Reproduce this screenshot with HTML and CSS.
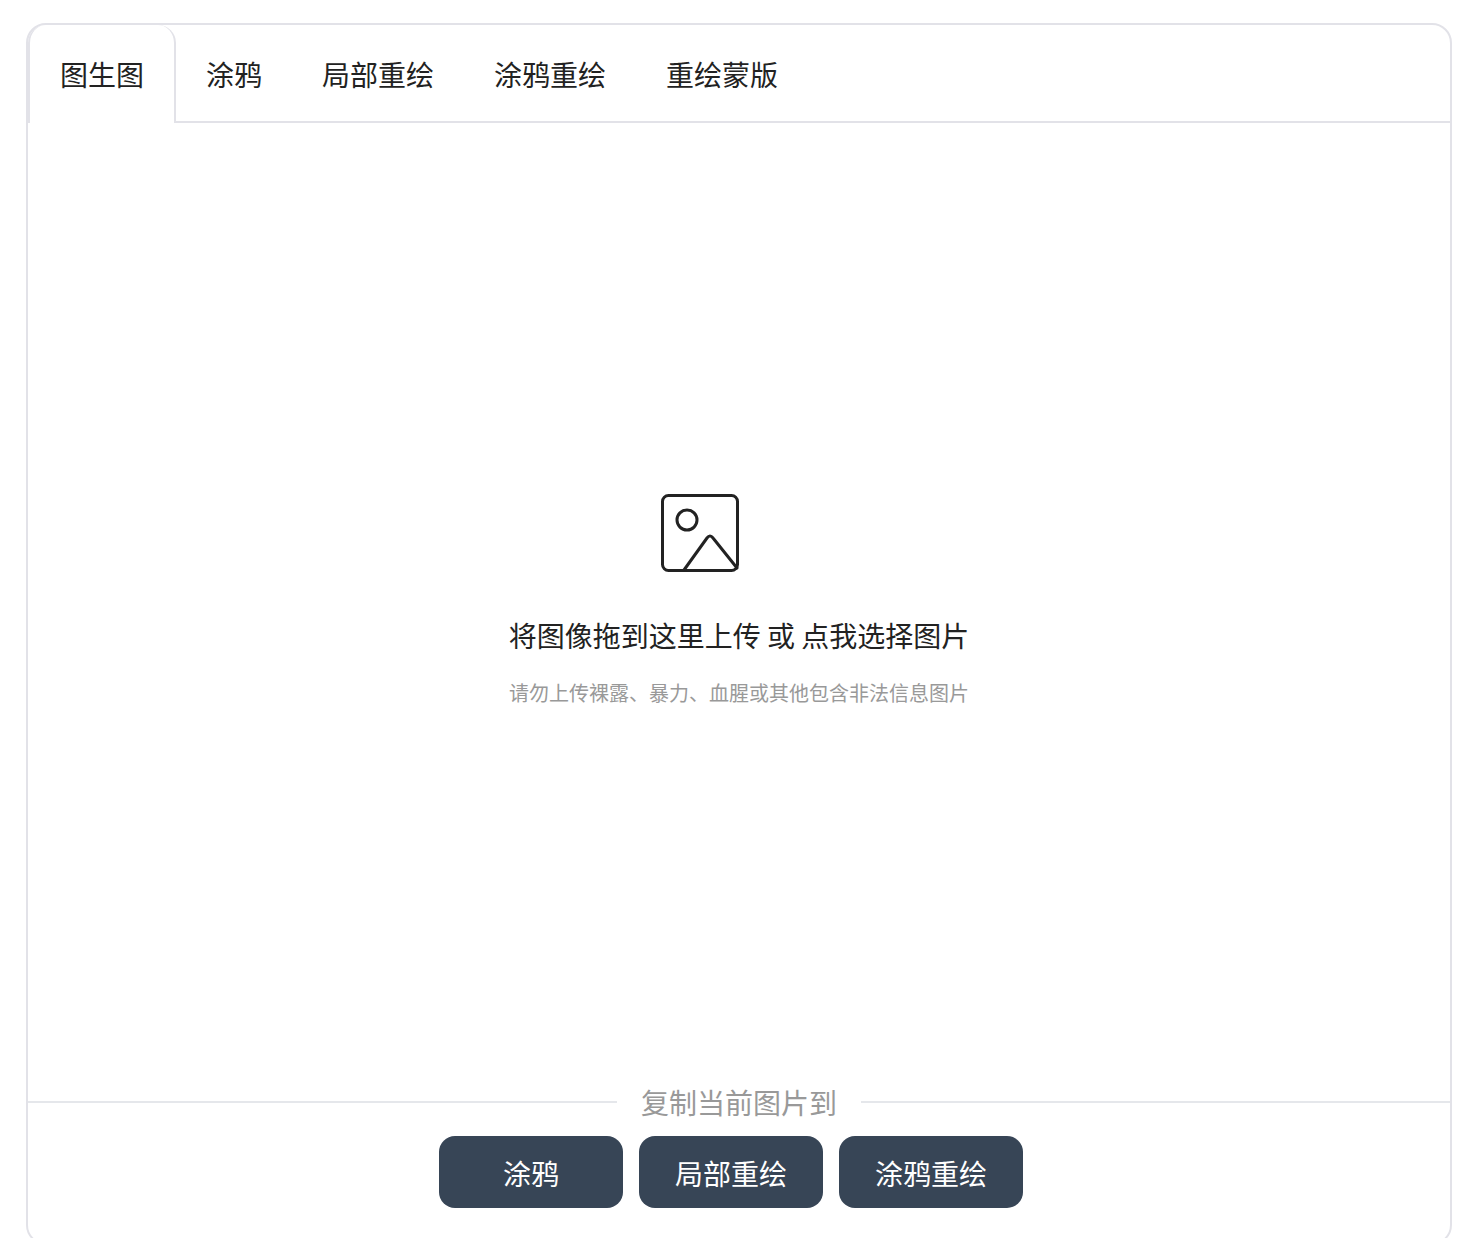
FILE: index.html
```html
<!DOCTYPE html>
<html lang="zh-CN">
<head>
    <meta charset="UTF-8">
    <title>图生图</title>
    <link rel="stylesheet" href="styles.css">
</head>
<body>

<div class="card">
    <nav class="tabs">
        <a class="tab active" href="#">图生图</a>
        <a class="tab" href="#">涂鸦</a>
        <a class="tab" href="#">局部重绘</a>
        <a class="tab" href="#">涂鸦重绘</a>
        <a class="tab" href="#">重绘蒙版</a>
    </nav>

    <div class="upload">
        <svg class="upload-icon" width="78" height="78" viewBox="0 0 78 78" fill="none" stroke="#222" stroke-width="3" stroke-linecap="round" stroke-linejoin="round">
            <rect x="1.5" y="1.5" width="75" height="75" rx="6"/>
            <circle cx="26" cy="26" r="10"/>
            <path d="M23 76 L46 44 Q49 40 52 44 L76 74"/>
        </svg>
        <p class="upload-title">将图像拖到这里上传 或 点我选择图片</p>
        <p class="upload-hint">请勿上传裸露、暴力、血腥或其他包含非法信息图片</p>
    </div>

    <div class="divider"><span>复制当前图片到</span></div>

    <div class="actions">
        <button type="button">涂鸦</button>
        <button type="button">局部重绘</button>
        <button type="button">涂鸦重绘</button>
    </div>
</div>

</body>
</html>
```

FILE: styles.css
```css
html, body {
    height: 1238px;
    overflow: hidden;
}
body {
    margin: 0;
    padding: 23px 20px 0 26px;
    background-color: #fff;
    font-family: "Noto Sans CJK SC", "Noto Sans", sans-serif;
    color: #222;
}
.card {
    box-sizing: border-box;
    display: flex;
    flex-direction: column;
    height: 1222px;
    border: 2px solid #e2e2e8;
    border-radius: 20px;
}
.tabs {
    display: flex;
    height: 96px;
    border-bottom: 2px solid #e2e2e8;
}
.tab {
    padding: 0 30px;
    font-size: 28px;
    line-height: 98px;
    color: #222;
    text-decoration: none;
}
.tab.active {
    height: 98px;
    padding: 0 30px 0 30px;
    background-color: #fff;
    border: solid #e2e2e8;
    border-width: 0 2px 0 2px;
    border-radius: 18px 18px 0 0;
}
.upload {
    flex: 1;
    display: flex;
    flex-direction: column;
    align-items: center;
    padding-top: 371px;
}
.upload-icon {
    display: block;
    margin-right: 78px;
}
.upload-title {
    margin: 42px 0 0;
    font-size: 28px;
    line-height: 42px;
}
.upload-hint {
    margin: 22px 0 0;
    font-size: 20px;
    line-height: 30px;
    color: #999;
}
.divider {
    display: flex;
    align-items: center;
    font-size: 28px;
    line-height: 42px;
    color: #999;
}
.divider::before, .divider::after {
    content: "";
    flex: 1;
    height: 2px;
    background-color: #e5e7eb;
}
.divider span {
    padding: 0 24px;
}
.actions {
    display: flex;
    justify-content: center;
    gap: 16px;
    padding: 13px 16px 35px 0;
}
.actions button {
    width: 184px;
    height: 72px;
    padding: 2px 0 0;
    border: none;
    border-radius: 16px;
    background-color: #374556;
    color: #fff;
    font-family: inherit;
    font-size: 28px;
}
```
